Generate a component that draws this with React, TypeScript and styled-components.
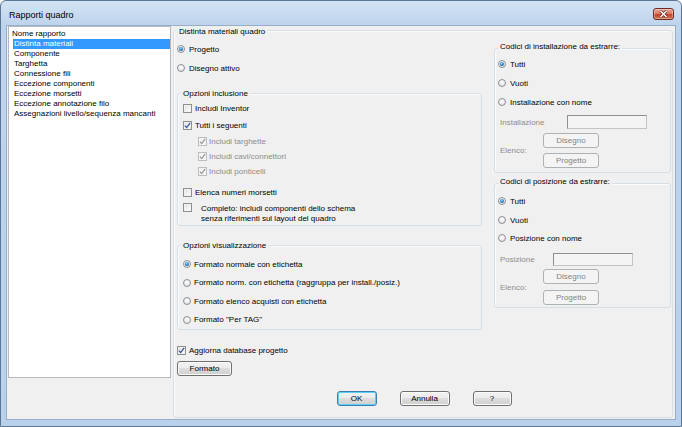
import React from "react";
import styled, { createGlobalStyle, css } from "styled-components";

const GlobalStyle = createGlobalStyle`
  html, body { margin: 0; padding: 0; background: #ffffff; }
  body {
    font-family: "Liberation Sans", Arial, sans-serif;
    font-size: 8px;
    color: #000;
  }
  *, *::before, *::after { box-sizing: border-box; }
`;

const Window = styled.div`
  width: 682px;
  height: 427px;
  display: flex;
  flex-direction: column;
  border: 1px solid #5b7795;
  border-radius: 6px 6px 0 0;
  background: linear-gradient(to bottom, #d3e3f4 0px, #bed4ec 24px, #b9d1ea 100%);
  overflow: hidden;
`;

const TitleBar = styled.div`
  height: 24px;
  flex: none;
  display: flex;
  justify-content: space-between;
  align-items: flex-start;
  padding: 4px 7px 0 8px;
`;

const Title = styled.div`
  font-size: 9px;
  line-height: 20px;
  color: #000;
`;

const CloseButton = styled.div`
  width: 21px;
  height: 12px;
  margin-top: 3px;
  border: 1px solid #6d2a24;
  border-radius: 3px;
  background: linear-gradient(#eba594 0%, #dc7a66 45%, #c5452f 55%, #d2704f 100%);
  box-shadow: inset 0 0 0 1px rgba(255, 255, 255, 0.35);
  display: flex;
  align-items: center;
  justify-content: center;
`;

const Client = styled.div`
  flex: 1;
  margin: 0 5px 6px 5px;
  background: #f0f0f0;
  border: 1px solid #98aec8;
  display: flex;
  gap: 2px;
  padding: 0 2px 1px 1px;
`;

const ReportList = styled.div`
  width: 163px;
  height: 352px;
  flex: none;
  background: #fff;
  border: 1px solid #b4b9bf;
  display: flex;
  flex-direction: column;
  padding-top: 2px;
`;

const ListHeader = styled.div`
  line-height: 10px;
  height: 10px;
  padding-left: 3px;
`;

const ListItem = styled.div<{ $selected?: boolean }>`
  height: 10px;
  line-height: 10px;
  margin-left: 4px;
  padding-left: 1px;
  white-space: nowrap;
  ${(p) =>
    p.$selected &&
    css`
      background: #3399ff;
      color: #fff;
    `}
`;

const GroupFrame = styled.div`
  position: relative;
  border: 1px solid #d5dfe5;
  border-radius: 3px;
  box-shadow: inset 1px 1px 0 #fbfbfb;
`;

const Legend = styled.span<{ $top?: number }>`
  position: absolute;
  top: ${(p) => p.$top ?? -5}px;
  left: 3px;
  padding: 0 2px;
  line-height: 10px;
  background: #f0f0f0;
  white-space: nowrap;
`;

const MainGroup = styled(GroupFrame)`
  flex: 1;
  margin-top: 4px;
  padding: 12px 1px 0 3px;
  display: flex;
  flex-direction: column;
`;

const TopArea = styled.div`
  display: flex;
  gap: 12px;
  align-items: flex-start;
`;

const LeftCol = styled.div`
  width: 305px;
  display: flex;
  flex-direction: column;
`;

const RightCol = styled.div`
  width: 177px;
  margin-top: 5px;
  display: flex;
  flex-direction: column;
`;

const SubGroup = styled(GroupFrame)<{ $h: number; $mt: number; $pt: number; $pl: number }>`
  height: ${(p) => p.$h}px;
  margin-top: ${(p) => p.$mt}px;
  padding: ${(p) => p.$pt}px 0 0 ${(p) => p.$pl}px;
  display: flex;
  flex-direction: column;
`;

const Option = styled.div<{ $mt?: number; $indent?: number; $disabled?: boolean; $gap?: number }>`
  display: flex;
  align-items: center;
  gap: ${(p) => p.$gap ?? 4}px;
  height: 12px;
  margin-top: ${(p) => p.$mt ?? 0}px;
  padding-left: ${(p) => p.$indent ?? 0}px;
  color: ${(p) => (p.$disabled ? "#8d8d8d" : "#000")};
  white-space: nowrap;
`;

const TallOption = styled.div<{ $mt?: number }>`
  display: flex;
  align-items: flex-start;
  gap: 9px;
  margin-top: ${(p) => p.$mt ?? 0}px;
`;

const TwoLine = styled.div`
  line-height: 9.5px;
  padding-top: 1px;
`;

const RadioDot = styled.span<{ $on?: boolean }>`
  position: relative;
  width: 8px;
  height: 8px;
  flex: none;
  border-radius: 50%;
  border: 1px solid #8c9197;
  background: radial-gradient(circle at 50% 35%, #ffffff 0%, #e6e6e6 70%, #d4d4d4 100%);
  ${(p) =>
    p.$on &&
    css`
      &::after {
        content: "";
        position: absolute;
        inset: 1px;
        border-radius: 50%;
        background: radial-gradient(circle at 45% 35%, #9adcff 0%, #2c86cf 45%, #0c4a86 100%);
      }
    `}
`;

const Box = styled.span<{ $disabled?: boolean }>`
  width: 9px;
  height: 9px;
  flex: none;
  display: inline-flex;
  align-items: center;
  justify-content: center;
  border: 1px solid ${(p) => (p.$disabled ? "#bdbdbd" : "#8e8f8f")};
  background: ${(p) =>
    p.$disabled ? "#f4f4f4" : "linear-gradient(135deg, #d6d9dd 0%, #f4f4f4 60%, #ffffff 100%)"};
  box-shadow: inset 0 0 0 1px ${(p) => (p.$disabled ? "#f7f7f7" : "#f2f2f2")};
`;

const FieldRow = styled.div<{ $mt: number; $h: number }>`
  display: flex;
  align-items: center;
  height: ${(p) => p.$h}px;
  margin-top: ${(p) => p.$mt}px;
  padding-left: 2px;
  color: #8d8d8d;
`;

const FieldLabel = styled.span<{ $w: number }>`
  width: ${(p) => p.$w}px;
  flex: none;
`;

const TextBox = styled.div`
  width: 80px;
  height: 100%;
  border: 1px solid #8f8f8f;
  border-right-color: #c4c4c4;
  border-bottom-color: #c4c4c4;
  background: #f4f4f4;
`;

const ListBlock = styled.div<{ $mt: number; $gap: number }>`
  display: flex;
  align-items: center;
  margin-top: ${(p) => p.$mt}px;
  padding-left: 2px;
  color: #8d8d8d;
  & > div {
    display: flex;
    flex-direction: column;
    gap: ${(p) => p.$gap}px;
  }
`;

const Button = styled.button<{ $w: number; $default?: boolean }>`
  width: ${(p) => p.$w}px;
  height: 15px;
  padding: 0;
  flex: none;
  font: inherit;
  font-size: 8px;
  line-height: 13px;
  color: #000;
  border: 1px solid #707070;
  border-radius: 3px;
  background: linear-gradient(#f2f2f2 0%, #ebebeb 49%, #dddddd 50%, #cfcfcf 100%);
  box-shadow: inset 0 0 0 1px #fbfbfb;
  ${(p) =>
    p.$default &&
    css`
      border-color: #3c7fb1;
      box-shadow: inset 0 0 0 1px #5fd0f5;
    `}
  &:disabled {
    color: #838383;
    border-color: #adb2b5;
    background: #f4f4f4;
    box-shadow: none;
  }
`;

const FormatoRow = styled.div`
  margin-top: 5px;
  display: flex;
`;

const ButtonRow = styled.div`
  margin-top: 15px;
  display: flex;
  justify-content: center;
  gap: 23px;
`;

function Radio({ on }: { on?: boolean }) {
  return <RadioDot $on={on} />;
}

function Check({ checked, disabled }: { checked?: boolean; disabled?: boolean }) {
  return (
    <Box $disabled={disabled}>
      {checked && (
        <svg width="7" height="7" viewBox="0 0 7 7">
          <path
            d="M0.9 3.6 L2.7 5.6 L6.2 0.9"
            fill="none"
            stroke={disabled ? "#9a9a9a" : "#34529a"}
            strokeWidth="1.3"
          />
        </svg>
      )}
    </Box>
  );
}

const reports = [
  "Distinta materiali",
  "Componente",
  "Targhetta",
  "Connessione fili",
  "Eccezione componenti",
  "Eccezione morsetti",
  "Eccezione annotazione filo",
  "Assegnazioni livello/sequenza mancanti",
];

export default function App() {
  return (
    <>
      <GlobalStyle />
      <Window>
        <TitleBar>
          <Title>Rapporti quadro</Title>
          <CloseButton>
            <svg width="9" height="8" viewBox="0 0 9 8">
              <path d="M1.5 1 L7.5 7 M7.5 1 L1.5 7" stroke="#5a1b14" strokeWidth="2.6" />
              <path d="M1.5 1 L7.5 7 M7.5 1 L1.5 7" stroke="#ffffff" strokeWidth="1.5" />
            </svg>
          </CloseButton>
        </TitleBar>
        <Client>
          <ReportList>
            <ListHeader>Nome rapporto</ListHeader>
            {reports.map((r, i) => (
              <ListItem key={r} $selected={i === 0}>
                {r}
              </ListItem>
            ))}
          </ReportList>

          <MainGroup>
            <Legend $top={-4}>Distinta materiali quadro</Legend>
            <TopArea>
              <LeftCol>
                <Option>
                  <Radio on />
                  Progetto
                </Option>
                <Option $mt={7}>
                  <Radio />
                  Disegno attivo
                </Option>

                <SubGroup $h={133} $mt={19} $pt={8} $pl={5}>
                  <Legend>Opzioni inclusione</Legend>
                  <Option $gap={3}>
                    <Check />
                    Includi Inventor
                  </Option>
                  <Option $gap={3} $mt={5}>
                    <Check checked />
                    Tutti i seguenti
                  </Option>
                  <Option $gap={2} $mt={4} $indent={15} $disabled>
                    <Check checked disabled />
                    Includi targhette
                  </Option>
                  <Option $gap={2} $mt={3} $indent={15} $disabled>
                    <Check checked disabled />
                    Includi cavi/connettori
                  </Option>
                  <Option $gap={2} $mt={3} $indent={15} $disabled>
                    <Check checked disabled />
                    Includi ponticelli
                  </Option>
                  <Option $gap={3} $mt={9}>
                    <Check />
                    Elenca numeri morsetti
                  </Option>
                  <TallOption $mt={5}>
                    <Check />
                    <TwoLine>
                      Completo: includi componenti dello schema
                      <br />
                      senza riferimenti sul layout del quadro
                    </TwoLine>
                  </TallOption>
                </SubGroup>

                <SubGroup $h={85} $mt={19} $pt={12} $pl={5}>
                  <Legend>Opzioni visualizzazione</Legend>
                  <Option $gap={3}>
                    <Radio on />
                    Formato normale con etichetta
                  </Option>
                  <Option $gap={3} $mt={6.5}>
                    <Radio />
                    Formato norm. con etichetta (raggruppa per install./posiz.)
                  </Option>
                  <Option $gap={3} $mt={6.5}>
                    <Radio />
                    Formato elenco acquisti con etichetta
                  </Option>
                  <Option $gap={3} $mt={6.5}>
                    <Radio />
                    Formato "Per TAG"
                  </Option>
                </SubGroup>

                <Option $gap={3} $mt={14}>
                  <Check checked />
                  Aggiorna database progetto
                </Option>
                <FormatoRow>
                  <Button $w={55}>Formato</Button>
                </FormatoRow>
              </LeftCol>

              <RightCol>
                <SubGroup $h={125} $mt={0} $pt={9} $pl={3}>
                  <Legend $top={-7}>Codici di installazione da estrarre:</Legend>
                  <Option>
                    <Radio on />
                    Tutti
                  </Option>
                  <Option $mt={7}>
                    <Radio />
                    Vuoti
                  </Option>
                  <Option $mt={7}>
                    <Radio />
                    Installazione con nome
                  </Option>
                  <FieldRow $mt={7} $h={14}>
                    <FieldLabel $w={67}>Installazione</FieldLabel>
                    <TextBox />
                  </FieldRow>
                  <ListBlock $mt={4} $gap={5}>
                    <FieldLabel $w={43}>Elenco:</FieldLabel>
                    <div>
                      <Button $w={56} disabled>
                        Disegno
                      </Button>
                      <Button $w={56} disabled>
                        Progetto
                      </Button>
                    </div>
                  </ListBlock>
                </SubGroup>

                <SubGroup $h={125} $mt={10} $pt={11} $pl={3}>
                  <Legend $top={-7}>Codici di posizione da estrarre:</Legend>
                  <Option>
                    <Radio on />
                    Tutti
                  </Option>
                  <Option $mt={7}>
                    <Radio />
                    Vuoti
                  </Option>
                  <Option $mt={6}>
                    <Radio />
                    Posizione con nome
                  </Option>
                  <FieldRow $mt={9} $h={13}>
                    <FieldLabel $w={53}>Posizione</FieldLabel>
                    <TextBox />
                  </FieldRow>
                  <ListBlock $mt={3} $gap={6}>
                    <FieldLabel $w={43}>Elenco:</FieldLabel>
                    <div>
                      <Button $w={56} disabled>
                        Disegno
                      </Button>
                      <Button $w={56} disabled>
                        Progetto
                      </Button>
                    </div>
                  </ListBlock>
                </SubGroup>
              </RightCol>
            </TopArea>

            <ButtonRow>
              <Button $w={40} $default>
                OK
              </Button>
              <Button $w={50}>Annulla</Button>
              <Button $w={39}>?</Button>
            </ButtonRow>
          </MainGroup>
        </Client>
      </Window>
    </>
  );
}
